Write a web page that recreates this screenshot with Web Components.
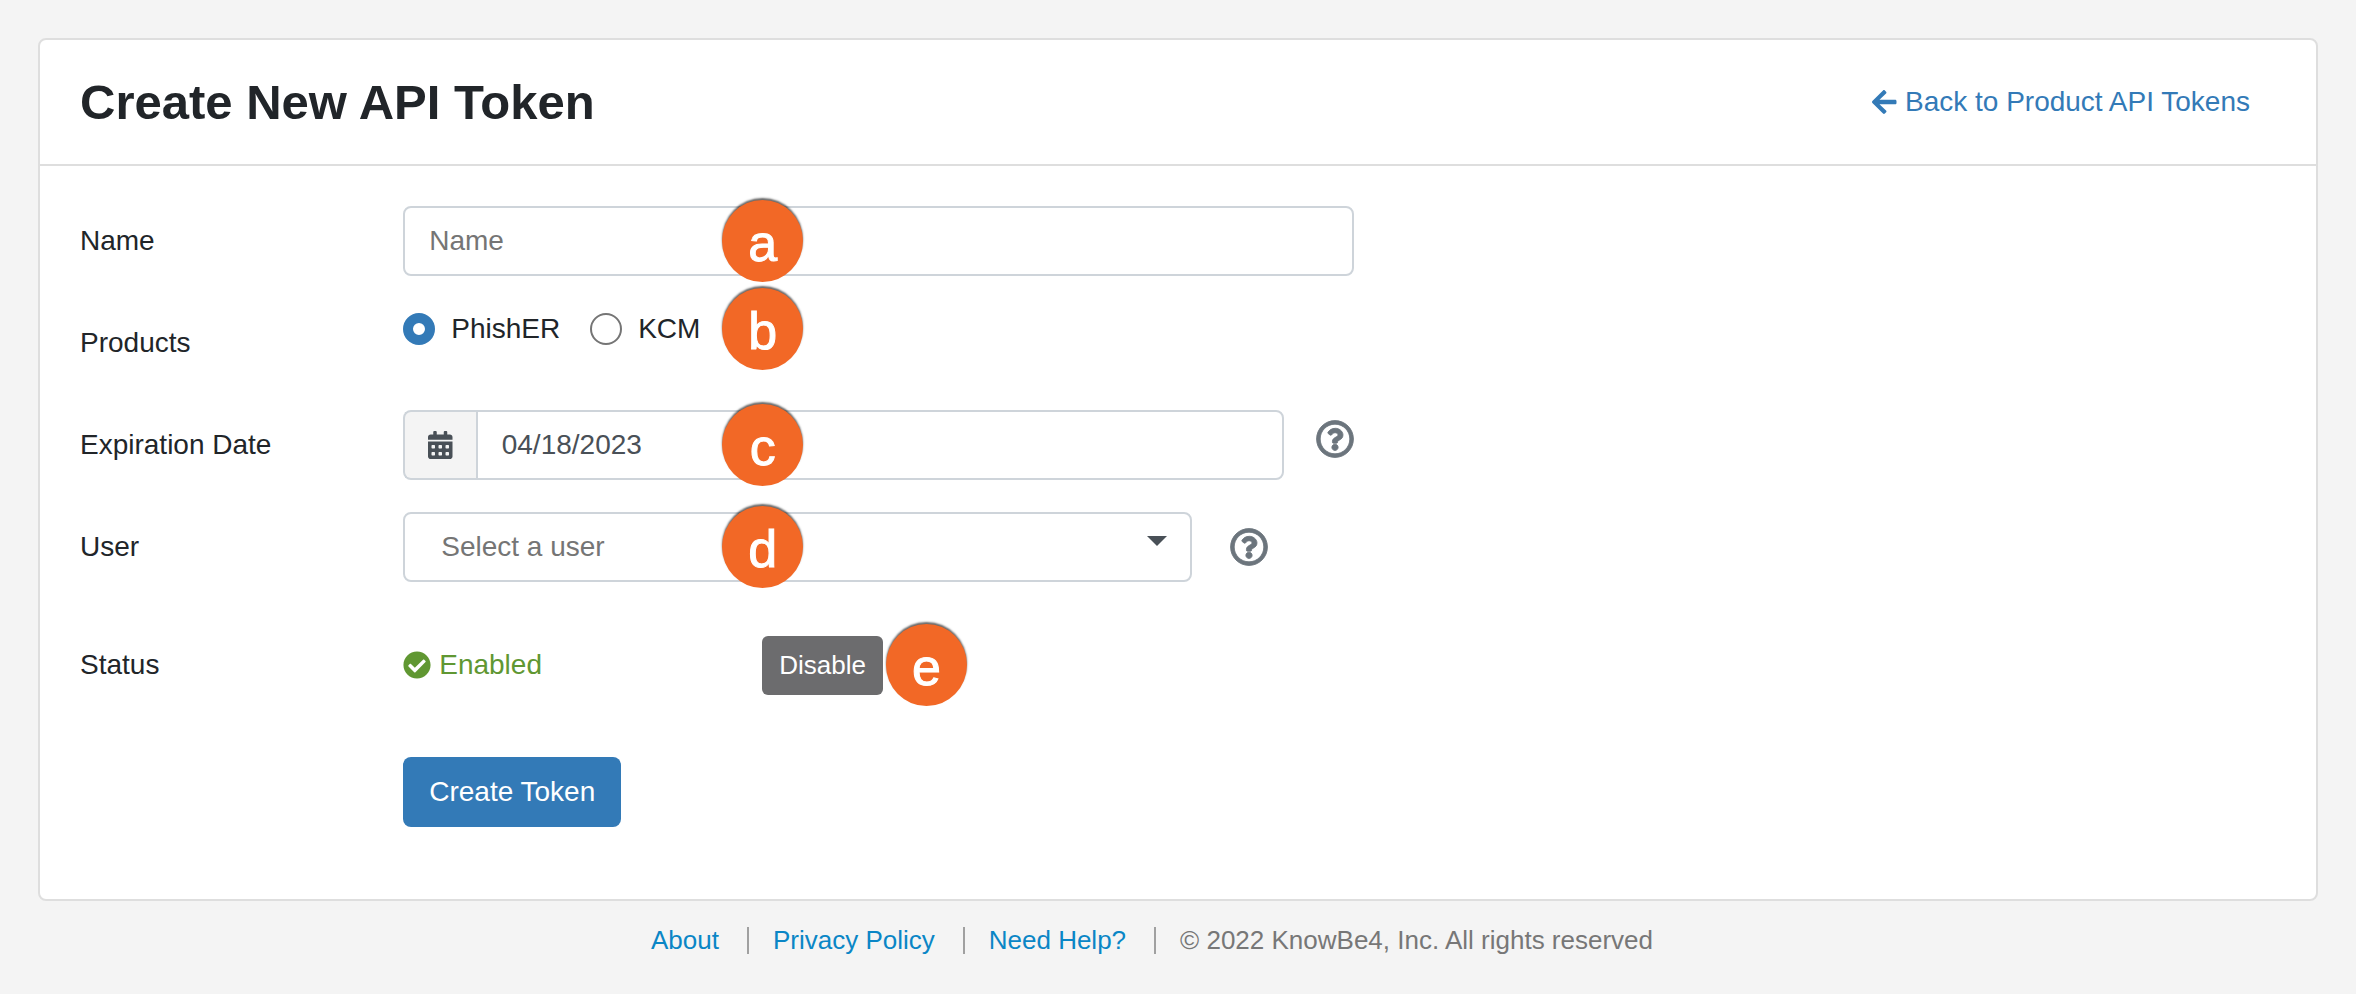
<!DOCTYPE html>
<html lang="en">
<head>
<meta charset="utf-8">
<title>Create New API Token</title>
<style>
    body {
        margin: 0;
        background-color: #f4f4f4;
        color: #212529;
        font: 28px/42px "Liberation Sans", Arial, sans-serif;
    }
</style>
</head>
<body>
<page-card>
    <h1 slot="title">Create New API Token</h1>
    <back-link slot="action" href="#tokens">Back to Product API Tokens</back-link>
    <token-form></token-form>
</page-card>
<page-footer>© 2022 KnowBe4, Inc. All rights reserved</page-footer>

<script>
function define(name, html) {
    const template = document.createElement('template');
    template.innerHTML = html;

    window.customElements.define(name, class extends HTMLElement {
        constructor() {
            super();
            this.attachShadow({ mode: "open" });
            this.shadowRoot.appendChild(template.content.cloneNode(true));
        }
    });
}

const icons = {
    arrow: ['0 0 448 512', 'M257.5 445.1l-22.2 22.2c-9.4 9.4-24.6 9.4-33.9 0L7 273c-9.4-9.4-9.4-24.6 0-33.9L201.4 44.7c9.4-9.4 24.6-9.4 33.9 0l22.2 22.2c9.5 9.5 9.3 25-.4 34.3L136.6 216H424c13.3 0 24 10.7 24 24v32c0 13.3-10.7 24-24 24H136.6l120.5 114.8c9.8 9.3 10 24.8.4 34.3z'],
    calendar: ['0 0 448 512', 'M0 464c0 26.5 21.5 48 48 48h352c26.5 0 48-21.5 48-48V192H0v272zm320-196c0-6.600 5.400-12 12-12h40c6.600 0 12 5.400 12 12v40c0 6.600-5.400 12-12 12h-40c-6.600 0-12-5.400-12-12v-40zm0 128c0-6.600 5.400-12 12-12h40c6.600 0 12 5.400 12 12v40c0 6.600-5.400 12-12 12h-40c-6.600 0-12-5.400-12-12v-40zM192 268c0-6.600 5.400-12 12-12h40c6.600 0 12 5.400 12 12v40c0 6.600-5.400 12-12 12h-40c-6.600 0-12-5.400-12-12v-40zm0 128c0-6.600 5.400-12 12-12h40c6.600 0 12 5.400 12 12v40c0 6.600-5.400 12-12 12h-40c-6.600 0-12-5.400-12-12v-40zM64 268c0-6.600 5.400-12 12-12h40c6.600 0 12 5.400 12 12v40c0 6.600-5.400 12-12 12H76c-6.600 0-12-5.400-12-12v-40zm0 128c0-6.600 5.400-12 12-12h40c6.600 0 12 5.400 12 12v40c0 6.600-5.400 12-12 12H76c-6.600 0-12-5.400-12-12v-40zM400 64h-48V16c0-8.800-7.200-16-16-16h-32c-8.800 0-16 7.200-16 16v48H160V16c0-8.800-7.200-16-16-16h-32c-8.800 0-16 7.200-16 16v48H48C21.500 64 0 85.500 0 112v48h448v-48c0-26.500-21.500-48-48-48z'],
    check: ['0 0 512 512', 'M504 256c0 136.967-111.033 248-248 248S8 392.967 8 256 119.033 8 256 8s248 111.033 248 248zM227.314 387.314l184-184c6.248-6.248 6.248-16.379 0-22.627l-22.627-22.627c-6.248-6.249-16.379-6.249-22.628 0L216 308.118l-70.059-70.059c-6.248-6.248-16.379-6.248-22.628 0l-22.627 22.627c-6.248 6.248-6.248 16.379 0 22.627l104 104c6.249 6.249 16.379 6.249 22.628.001z'],
    question: ['0 0 512 512', 'M256 8C119.043 8 8 119.083 8 256c0 136.997 111.043 248 248 248s248-111.003 248-248C504 119.083 392.957 8 256 8zm0 448c-110.532 0-200-89.431-200-200 0-110.495 89.472-200 200-200 110.491 0 200 89.471 200 200 0 110.530-89.431 200-200 200zm107.244-255.200c0 67.052-72.421 68.084-72.421 92.863V300c0 6.627-5.373 12-12 12h-45.647c-6.627 0-12-5.373-12-12v-8.659c0-35.745 27.100-50.034 47.579-61.516 17.561-9.845 28.324-16.541 28.324-29.579 0-17.246-21.999-28.693-39.784-28.693-23.189 0-33.894 10.977-48.942 29.969-4.057 5.120-11.460 6.071-16.666 2.124l-27.824-21.098c-5.107-3.872-6.251-11.066-2.644-16.363C184.846 131.491 214.940 112 261.794 112c49.071 0 101.450 38.304 101.450 88.800zM298 368c0 23.159-18.841 42-42 42s-42-18.841-42-42 18.841-42 42-42 42 18.841 42 42z'],
    caret: ['0 0 20 10', 'M0 0h20L10 10z']
};

// <fa-icon name="check">, sized by the height set on the host
class FaIcon extends HTMLElement {
    constructor() {
        super();
        this.attachShadow({ mode: "open" });
    }

    connectedCallback() {
        const [viewBox, path] = icons[this.getAttribute('name')];
        this.shadowRoot.innerHTML = `
        <style>
            :host { display: inline-flex; height: 28px; }
            svg { height: 100%; fill: currentColor; }
        </style>
        <svg viewBox="${viewBox}" aria-hidden="true"><path d="${path}"/></svg>`;
    }
}
window.customElements.define('fa-icon', FaIcon);

class BackLink extends HTMLElement {
    constructor() {
        super();
        this.attachShadow({ mode: "open" });
    }

    connectedCallback() {
        this.shadowRoot.innerHTML = `
        <style>
            :host { display: block; }
            a {
                display: flex;
                align-items: center;
                gap: 8px;
                color: #337ab7;
                text-decoration: none;
            }
            a:hover { text-decoration: underline; }
        </style>
        <a href="${this.getAttribute('href')}"><fa-icon name="arrow"></fa-icon><span><slot></slot></span></a>`;
    }
}
window.customElements.define('back-link', BackLink);

define('page-card', `
<style>
    :host {
        display: block;
        margin: 38px 38px 0;
        border: 2px solid #dedede;
        border-radius: 8px;
        background-color: #fff;
    }

    header {
        display: flex;
        align-items: center;
        justify-content: space-between;
        gap: 24px;
        padding: 32px 66px 32px 40px;
        border-bottom: 2px solid #dedede;
    }

    ::slotted(h1) {
        margin: 0;
        font-size: 49px;
        line-height: 60px;
    }

    main {
        padding: 40px 40px 72px;
    }
</style>
<header>
    <slot name="title"></slot>
    <slot name="action"></slot>
</header>
<main><slot></slot></main>`);

define('form-row', `
<style>
    :host {
        display: grid;
        grid-template-columns: 34fr 100fr 97fr;
        align-items: center;
        min-height: 70px;
        margin-bottom: 32px;
    }

    .field {
        grid-column: 2;
        display: flex;
        position: relative;
    }

    :host([top]) .field {
        align-self: start;
    }
</style>
<div><slot name="label"></slot></div>
<div class="field"><slot></slot></div>`);

// Round lettered marker. Floats over a field unless it is inline
define('call-out', `
<style>
    :host {
        position: absolute;
        top: 50%;
        left: 319px;
        transform: translateY(-50%);
        box-sizing: border-box;
        width: 81px;
        height: 82px;
        padding-top: 4px;
        border-radius: 50%;
        background-color: #f26826;
        box-shadow: 0 -2px 2px rgba(0, 0, 0, .6);
        color: #fff;
        font-size: 52px;
        line-height: 78px;
        text-align: center;
        -webkit-text-stroke: 1px #fff;
        pointer-events: none;
    }

    :host([inline]) {
        position: static;
        transform: none;
    }
</style>
<slot></slot>`);

define('help-tip', `
<style>
    :host {
        display: block;
    }

    button {
        display: flex;
        padding: 10px 0;
        border: none;
        background: none;
        color: #6c757d;
        cursor: pointer;
    }

    fa-icon {
        height: 38px;
        stroke: currentColor;
        stroke-width: 12px;
    }
</style>
<button type="button" aria-label="Help"><fa-icon name="question"></fa-icon></button>`);

define('token-form', `
<style>
    :host {
        display: block;
    }

    input, select, button {
        box-sizing: border-box;
        font: inherit;
    }

    .control {
        flex: 1;
        min-width: 0;
        height: 70px;
        padding: 0 24px;
        border: 2px solid #ced4da;
        border-radius: 8px;
        background-color: #fff;
        color: #495057;
    }

    .control::placeholder {
        color: #757575;
        opacity: 1;
    }

    .radios {
        display: flex;
        gap: 30px;
    }

    .radios label {
        display: flex;
        align-items: center;
        gap: 16px;
    }

    .radios input {
        appearance: none;
        width: 32px;
        height: 32px;
        margin: 0;
        border: 2px solid #757575;
        border-radius: 50%;
        background-color: #fff;
    }

    .radios input:checked {
        border: 10px solid #337ab7;
    }

    .group {
        display: flex;
        flex: 1;
        margin-right: 32px;
    }

    .addon {
        display: flex;
        align-items: center;
        padding: 0 23px;
        border: 2px solid #ced4da;
        border-right: none;
        border-radius: 8px 0 0 8px;
        background-color: #f4f4f4;
        color: #495057;
    }

    .group .control {
        border-radius: 0 8px 8px 0;
    }

    .user {
        display: flex;
        align-items: center;
        width: 91%;
    }

    .select {
        display: flex;
        flex: 1;
        position: relative;
        margin-right: 38px;
    }

    .select .control {
        appearance: none;
        padding: 0 36px;
        color: #757575;
    }

    .select fa-icon {
        position: absolute;
        top: 24px;
        right: 25px;
        height: 10px;
        color: #495057;
        pointer-events: none;
    }

    .status {
        display: flex;
        align-items: center;
        flex-wrap: wrap;
    }

    .enabled {
        display: flex;
        align-items: center;
        gap: 8px;
        min-width: 359px;
        color: #609732;
    }

    button {
        border: none;
        border-radius: 8px;
        color: #fff;
        cursor: pointer;
    }

    .disable {
        height: 59px;
        margin-right: 3px;
        padding: 0 17px;
        border-radius: 6px;
        background-color: #6c6c6e;
        font-size: 26px;
    }

    .submit {
        height: 70px;
        padding: 0 26px;
        background-color: #337ab7;
    }

    .status-row {
        margin: 42px 0 51px;
    }

    form-row:last-of-type {
        margin-bottom: 0;
    }
</style>
<form>
    <form-row>
        <label slot="label" for="name">Name</label>
        <input class="control" id="name" type="text" placeholder="Name">
        <call-out>a</call-out>
    </form-row>
    <form-row top>
        <span slot="label" id="products">Products</span>
        <div class="radios" role="radiogroup" aria-labelledby="products">
            <label><input type="radio" name="product" checked>PhishER</label>
            <label><input type="radio" name="product">KCM</label>
        </div>
        <call-out>b</call-out>
    </form-row>
    <form-row>
        <label slot="label" for="expires">Expiration Date</label>
        <div class="group">
            <span class="addon"><fa-icon name="calendar"></fa-icon></span>
            <input class="control" id="expires" type="text" value="04/18/2023">
        </div>
        <help-tip></help-tip>
        <call-out>c</call-out>
    </form-row>
    <form-row>
        <label slot="label" for="user">User</label>
        <div class="user">
            <div class="select">
                <select class="control" id="user"><option>Select a user</option></select>
                <fa-icon name="caret"></fa-icon>
            </div>
            <help-tip></help-tip>
        </div>
        <call-out>d</call-out>
    </form-row>
    <form-row class="status-row">
        <span slot="label">Status</span>
        <div class="status">
            <span class="enabled"><fa-icon name="check"></fa-icon>Enabled</span>
            <button class="disable" type="button">Disable</button>
            <call-out inline>e</call-out>
        </div>
    </form-row>
    <form-row>
        <button class="submit" type="submit">Create Token</button>
    </form-row>
</form>`);

define('page-footer', `
<style>
    :host {
        display: flex;
        flex-wrap: wrap;
        align-items: center;
        justify-content: center;
        padding: 18px 52px 18px 0;
        color: #777;
        font-size: 26px;
    }

    a {
        display: flex;
        align-items: center;
        color: #0a86c6;
        text-decoration: none;
    }

    a:hover {
        text-decoration: underline;
    }

    a::after {
        content: "";
        width: 2px;
        height: 27px;
        margin: 0 24px 0 28px;
        background-color: #a0a0a0;
    }
</style>
<a href="#about">About</a>
<a href="#privacy">Privacy Policy</a>
<a href="#help">Need Help?</a>
<span><slot></slot></span>`);
</script>
</body>
</html>
